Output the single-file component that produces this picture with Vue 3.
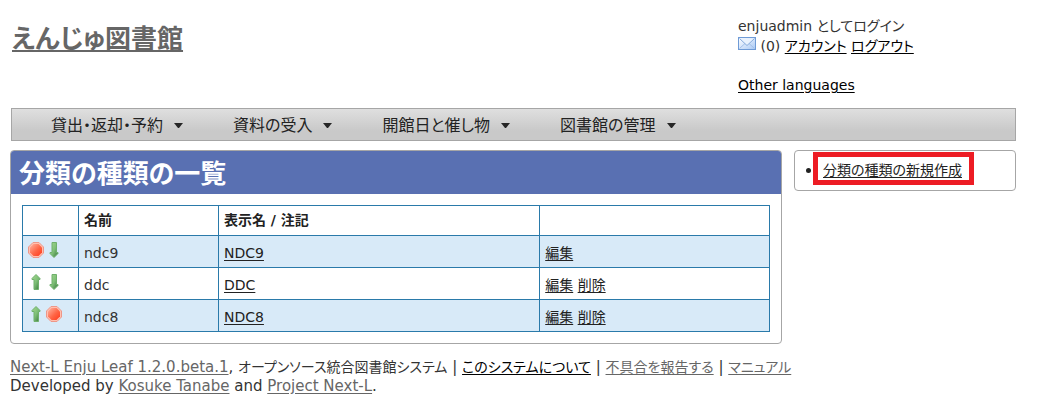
<script setup>
const menus = ['貸出・返却・予約', '資料の受入', '開館日と催し物', '図書館の管理']
const rows = [
  { name: 'ndc9', display: 'NDC9', icons: ['stop', 'down'], actions: ['編集'] },
  { name: 'ddc', display: 'DDC', icons: ['up', 'down'], actions: ['編集', '削除'] },
  { name: 'ndc8', display: 'NDC8', icons: ['up', 'stop'], actions: ['編集', '削除'] }
]
const labels = { up: '上へ移動', down: '下へ移動' }
</script>

<template>
  <div class="page">
    <svg class="defs" width="0" height="0" aria-hidden="true">
      <defs>
        <linearGradient id="green" x1="0" y1="0" x2="1" y2="1">
          <stop offset="0" stop-color="#a5d890" />
          <stop offset="0.5" stop-color="#7fc077" />
          <stop offset="1" stop-color="#35733a" />
        </linearGradient>
        <linearGradient id="red" x1="0" y1="0" x2="1" y2="1">
          <stop offset="0" stop-color="#ffb3a0" />
          <stop offset="0.55" stop-color="#ff6545" />
          <stop offset="1" stop-color="#ff3a1c" />
        </linearGradient>
        <linearGradient id="mail" x1="0" y1="0" x2="1" y2="1">
          <stop offset="0" stop-color="#ffffff" />
          <stop offset="1" stop-color="#a9c9f5" />
        </linearGradient>
      </defs>
    </svg>

    <header class="header">
      <h1 class="site-title"><a href="#">えんじゅ図書館</a></h1>
      <div class="account">
        <div>enjuadmin としてログイン</div>
        <div>
          <a href="#" class="mail" aria-label="メッセージ"><svg width="18" height="13" viewBox="0 0 18 13">
            <rect x="0.5" y="0.5" width="17" height="12" fill="url(#mail)" stroke="#6f9bd6" />
            <path d="M1.5 11.5 7 6.5M16.5 11.5 11 6.5" fill="none" stroke="#a3c0e8" />
            <path d="M1.5 1.5 9 8.5 16.5 1.5" fill="#e9f2fd" stroke="#86abdc" />
          </svg></a>
          (0) <a href="#">アカウント</a> <a href="#">ログアウト</a>
        </div>
        <div class="languages"><a href="#">Other languages</a></div>
      </div>
    </header>

    <nav class="menu">
      <button v-for="menu in menus" :key="menu" type="button">
        {{ menu }}
        <svg width="9" height="5" viewBox="0 0 9 5" aria-hidden="true"><path d="M0 0H9L5 5H4Z" fill="#262626" /></svg>
      </button>
    </nav>

    <div class="columns">
      <main class="content">
        <h2>分類の種類の一覧</h2>
        <table>
          <colgroup><col class="c-move"><col class="c-name"><col class="c-display"><col></colgroup>
          <thead>
            <tr><th></th><th>名前</th><th>表示名 / 注記</th><th></th></tr>
          </thead>
          <tbody>
            <tr v-for="row in rows" :key="row.name">
              <td>
                <div class="icons">
                  <template v-for="icon in row.icons" :key="icon">
                    <svg v-if="icon === 'stop'" width="16" height="16" viewBox="0 0 16 16" aria-hidden="true">
                      <path d="M5 0.5H11L15.5 5V11L11 15.5H5L0.5 11V5Z" fill="#ffc0b0" stroke="#ee9788" />
                      <path d="M5.5 2H10.5L14 5.5V10.5L10.5 14H5.5L2 10.5V5.5Z" fill="url(#red)" />
                    </svg>
                    <a v-else href="#" :aria-label="labels[icon]">
                      <svg width="16" height="16" viewBox="0 0 16 16">
                        <path v-if="icon === 'up'" d="M8 0.5 12 4.5V5.5H10.5V15.5H6V5.5H4V4.5Z" fill="url(#green)" stroke="#6fb06c" />
                        <path v-else d="M8 15.5 12 11.5V10.5H10.5V0.5H6V10.5H4V11.5Z" fill="url(#green)" stroke="#6fb06c" />
                      </svg>
                    </a>
                  </template>
                </div>
              </td>
              <td>{{ row.name }}</td>
              <td><a href="#">{{ row.display }}</a></td>
              <td><template v-for="action in row.actions" :key="action"><a href="#">{{ action }}</a>{{ ' ' }}</template></td>
            </tr>
          </tbody>
        </table>
      </main>
      <aside class="side">
        <ul><li><a href="#">分類の種類の新規作成</a></li></ul>
      </aside>
    </div>

    <footer class="footer">
      <div><a href="#">Next-L Enju Leaf 1.2.0.beta.1</a>, <span class="ja">オープンソース統合図書館システム</span> | <a href="#" class="ja dark">このシステムについて</a> | <a href="#" class="ja">不具合を報告する</a> | <a href="#" class="ja">マニュアル</a></div>
      <div>Developed by <a href="#">Kosuke Tanabe</a> and <a href="#">Project Next-L</a>.</div>
    </footer>
  </div>
</template>

<style>
body {
  margin: 0;
  background: #fff;
}
</style>

<style scoped>
.page {
  padding: 16px 32px 0 10px;
  color: #333;
  font: 14px/19px "DejaVu Sans", "Noto Sans CJK JP", sans-serif;
  font-feature-settings: "palt";
}
.defs {
  position: absolute;
}
a {
  color: #222;
  text-underline-offset: 2px;
}
.header {
  display: grid;
  grid-template-columns: 728fr 278fr;
  height: 92px;
}
.site-title {
  margin: 5px 0 0 2px;
  font-size: 26px;
  line-height: 36px;
}
.site-title a {
  color: #666;
}
.account {
  line-height: 20px;
}
.account a {
  color: #000;
}
.mail svg {
  vertical-align: 1px;
}
.languages {
  margin-top: 19px;
}
.menu {
  display: flex;
  gap: 50px;
  height: 31px;
  margin-left: 1px;
  padding-left: 39px;
  border: 1px solid #a6a6a6;
  background: linear-gradient(#dfdfdf, #c9c9c9 70%);
}
.menu button {
  display: flex;
  align-items: center;
  gap: 11px;
  padding: 2px 0 0;
  border: 0;
  background: none;
  color: #222;
  font: 16px/24px "DejaVu Sans", "Noto Sans CJK JP", sans-serif;
  font-feature-settings: inherit;
}
.columns {
  display: grid;
  grid-template-columns: 772fr 222fr;
  gap: 12px;
  align-items: start;
  margin-top: 9px;
}
.content,
.side {
  border: 1px solid #a6a6a6;
  border-radius: 4px;
}
.content {
  padding-bottom: 11px;
}
.content h2 {
  margin: 0;
  padding: 5px 8px 2px;
  border-radius: 3px 3px 0 0;
  background: #5970b2;
  color: #fff;
  font-size: 26px;
  line-height: 36px;
}
table {
  width: calc(100% - 22px);
  margin: 11px 11px 0;
  border-collapse: collapse;
  table-layout: fixed;
}
.c-move {
  width: 56px;
}
.c-name {
  width: 140px;
}
.c-display {
  width: 43%;
}
th,
td {
  box-sizing: border-box;
  height: 32px;
  padding: 3px 5px 0;
  border: 1px solid #2a7aaa;
  text-align: left;
}
th {
  height: 30px;
  padding-top: 0;
  color: #222;
}
tbody tr:nth-child(odd) {
  background: #d8eaf8;
}
.icons {
  display: flex;
  gap: 2px;
  height: 22px;
}
.icons svg {
  display: block;
}
.side ul {
  margin: 0;
  padding: 1px 11px 5px;
  list-style: none;
}
.side li {
  display: flex;
  align-items: center;
  gap: 2px;
}
.side li::before {
  content: "";
  width: 5px;
  height: 5px;
  margin-top: 4px;
  border-radius: 50%;
  background: #222;
}
.side a {
  padding: 5px 7px 2px 5px;
  border: 5px solid #ed1c24;
  line-height: 16px;
}
.footer {
  margin-top: 14px;
  font-size: 15px;
}
.footer a {
  color: #666;
}
.footer .ja {
  font-size: 14px;
}
.footer .dark {
  color: #000;
}
</style>
